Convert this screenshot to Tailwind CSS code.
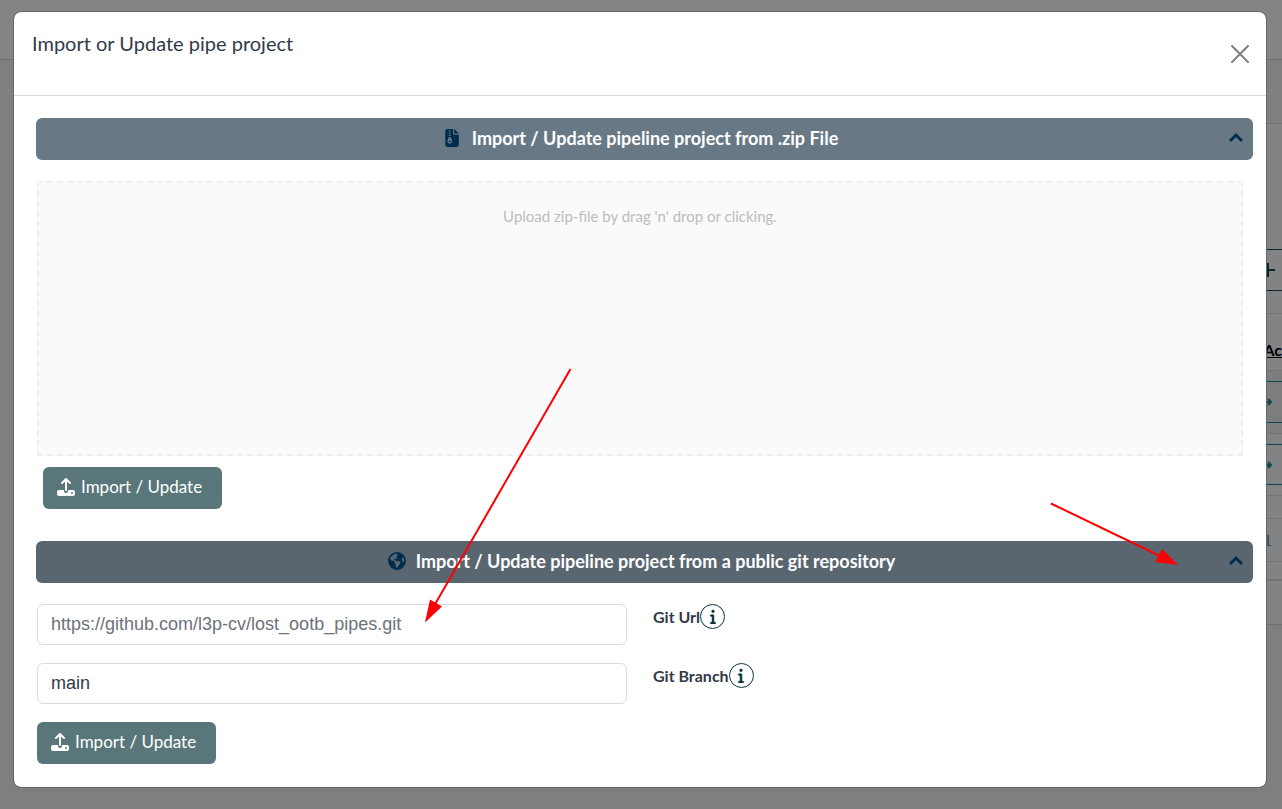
<!DOCTYPE html>
<html lang="en">
<head>
  <meta charset="UTF-8" />
  <meta name="viewport" content="width=device-width, initial-scale=1.0" />
  <title>Import or Update pipe project</title>
  <script src="https://cdn.jsdelivr.net/npm/@tailwindcss/browser@4"></script>
</head>
<body class="relative min-h-screen overflow-hidden bg-[#7e7f80] font-[Lato,sans-serif] text-[#323a49]">

  <!-- Dimmed page behind the dialog -->
  <div class="absolute inset-0 overflow-hidden" aria-hidden="true">
    <div class="h-[60px] border-b border-[#6f7072] bg-[#838485]"></div>
    <div class="mt-[63px] ml-auto w-1/2 border-y border-[#6f7072] bg-[#828384] pb-[43px]">
      <div class="flex h-[190px] flex-col items-end justify-end border-b border-[#737478] pb-[22px]">
        <div class="flex h-[42px] w-8 items-center border-y border-[#0a262b] pl-[10px] text-[#0a262b]">
          <svg class="size-4" viewBox="0 0 16 16" fill="none" stroke="currentColor" stroke-width="2"><path d="M8 1v14M1 8h14" /></svg>
        </div>
      </div>
      <div class="flex h-[57px] items-end justify-end border-b border-[#737478] pb-3">
        <span class="border-b border-black text-base leading-[14px] font-bold text-black">Ac</span>
      </div>
      <div class="flex h-[63px] items-center justify-end border-b border-[#737478] bg-[#7c7d7e]">
        <div class="flex h-[42px] w-8 items-center border-y border-[#0c484f] pl-3 text-[#0c484f]">
          <svg class="size-3" viewBox="0 0 12 12" fill="none" stroke="currentColor" stroke-width="2"><path d="M0 6h9M6 3l3 3-3 3" /></svg>
        </div>
      </div>
      <div class="flex h-[62px] items-center justify-end border-b border-[#737478]">
        <div class="flex h-[41px] w-8 items-center border-y border-[#0c484f] pl-3 text-[#0c484f]">
          <svg class="size-3" viewBox="0 0 12 12" fill="none" stroke="currentColor" stroke-width="2"><path d="M0 6h9M6 3l3 3-3 3" /></svg>
        </div>
      </div>
      <div class="h-[23px] border-b border-[#737478]"></div>
      <div class="flex h-[43px] items-center justify-end border-b border-[#737478] pr-[10px] text-base text-[#2d4a5c]">1</div>
      <div class="h-[19px] border-b-2 border-[#737478]"></div>
    </div>
  </div>

  <!-- Dialog -->
  <div role="dialog" aria-labelledby="dialog-title" class="relative mt-[11px] mr-[15px] ml-[13px] rounded-lg border border-[#666768] bg-white bg-clip-padding">
    <header class="flex h-[84px] items-center justify-between border-b border-[#d8dbe0] pr-4 pl-[18px]">
      <h1 id="dialog-title" class="pb-[22px] text-xl">Import or Update pipe project</h1>
      <button type="button" aria-label="Close" class="text-[#7f7f7f]">
        <svg class="size-5" viewBox="0 0 20 20" fill="none" stroke="currentColor" stroke-width="2" stroke-linecap="round"><path d="M2 2l16 16M18 2L2 18" /></svg>
      </button>
    </header>

    <main class="pt-[22px] pr-[13px] pb-[23px] pl-[22px]">
      <!-- Zip import -->
      <button type="button" aria-expanded="true" class="flex h-[42px] w-full items-center rounded-md bg-[#687885] px-[10px] pb-[2px] text-lg font-bold text-white">
        <span class="flex flex-1 items-center justify-center gap-[13px] pl-2">
          <svg class="h-[18px] w-[14px] text-[#002d4d]" viewBox="0 0 384 512" fill="currentColor"><path d="M64 0C28.7 0 0 28.7 0 64V448c0 35.3 28.7 64 64 64H320c35.3 0 64-28.7 64-64V160H256c-17.7 0-32-14.3-32-32V0H64zM256 0V128H384L256 0zM96 48c0-8.8 7.2-16 16-16h32c8.8 0 16 7.2 16 16s-7.2 16-16 16H112c-8.8 0-16-7.2-16-16zm0 64c0-8.8 7.2-16 16-16h32c8.8 0 16 7.2 16 16s-7.2 16-16 16H112c-8.8 0-16-7.2-16-16zm0 64c0-8.8 7.2-16 16-16h32c8.8 0 16 7.2 16 16s-7.2 16-16 16H112c-8.8 0-16-7.2-16-16zm-6.3 71.8c3.7-14 16.4-23.8 30.9-23.8h14.8c14.5 0 27.2 9.7 30.9 23.8l23.5 88.2c1.4 5.4 2.1 10.9 2.1 16.4c0 35.2-28.8 63.7-64 63.7s-64-28.5-64-63.7c0-5.5 .7-11.1 2.1-16.4l23.5-88.2zM112 336c-8.8 0-16 7.2-16 16s7.2 16 16 16h32c8.8 0 16-7.2 16-16s-7.2-16-16-16H112z" /></svg>
          Import / Update pipeline project from .zip File
        </span>
        <svg class="size-[14px] text-[#002d4d]" viewBox="0 0 14 14" fill="none" stroke="currentColor" stroke-width="3"><path d="M1 10l6-6 6 6" /></svg>
      </button>

      <div class="mt-[21px] mr-[10px] ml-px h-[275px] rounded-xs border-2 border-dashed border-[#eeeeee] bg-[#fafafa] pt-[21px] text-center text-[15px] leading-6 text-[#bdbdbd]">
        <p>Upload zip-file by drag 'n' drop or clicking.</p>
      </div>

      <button type="button" class="mt-[11px] ml-[7px] flex h-[42px] items-center gap-[6px] rounded-md bg-[#59777b] pr-5 pb-[2px] pl-[14px] text-[17px] text-white">
        <svg class="size-[18px]" viewBox="0 0 18 18" fill="none" stroke="currentColor" stroke-width="2" stroke-linecap="round" stroke-linejoin="round"><path d="M9 12V2M5 5l4-4 4 4" /><path fill="currentColor" stroke="none" d="M2 12h5v1a2 2 0 0 0 4 0v-1h5a2 2 0 0 1 2 2v2a2 2 0 0 1-2 2H2a2 2 0 0 1-2-2v-2a2 2 0 0 1 2-2z" /><circle cx="15" cy="15" r="1" fill="#59777b" stroke="none" /></svg>
        Import / Update
      </button>

      <!-- Git import -->
      <button type="button" aria-expanded="true" class="mt-8 flex h-[42px] w-full items-center rounded-md bg-[#596670] px-[10px] pb-[2px] text-lg font-bold text-white">
        <span class="flex flex-1 items-center justify-center gap-[10px] pl-2">
          <svg class="size-[18px] text-[#002d4d]" viewBox="0 0 512 512" fill="currentColor"><path d="M57.7 193l9.4 16.4c8.3 14.5 21.9 25.2 38 29.8L163 255.7c17.2 4.9 29 20.6 29 38.5v39.9c0 11 6.2 21 16 25.9s16 14.9 16 25.9v39c0 15.6 14.9 26.9 29.9 22.6c16.1-4.6 28.6-17.5 32.7-33.8l2.8-11.2c4.2-16.9 15.2-31.4 30.3-40l8.1-4.6c15-8.5 24.2-24.5 24.2-41.7v-8.3c0-12.7-5.1-24.9-14.1-33.9l-3.9-3.9c-9-9-21.2-14.1-33.9-14.1H257c-11.1 0-22.1-2.9-31.8-8.4l-34.5-19.7c-4.3-2.5-7.6-6.5-9.2-11.2c-3.2-9.6 1.1-20 10.2-24.5l5.9-3c6.6-3.3 14.3-3.9 21.3-1.5l23.2 7.7c8.2 2.7 17.2-.4 21.9-7.5c4.7-7 4.2-16.3-1.2-22.8l-13.6-16.3c-10-12-9.9-29.5 .3-41.3l15.7-18.3c8.8-10.3 10.2-25 3.5-36.7l-2.4-4.2c-3.5-.2-6.9-.3-10.4-.3C163.1 48 84.4 108.9 57.7 193zM464 256c0-36.8-9.6-71.4-26.4-101.5L412 164.8c-15.7 6.3-23.8 23.8-18.5 39.8l16.9 50.7c3.5 10.4 12 18.3 22.6 20.9l29.1 7.3c1.2-9 1.8-18.2 1.8-27.5zM0 256a256 256 0 1 1 512 0A256 256 0 1 1 0 256z" /></svg>
          Import / Update pipeline project from a public git repository
        </span>
        <svg class="size-[14px] text-[#002d4d]" viewBox="0 0 14 14" fill="none" stroke="currentColor" stroke-width="3"><path d="M1 10l6-6 6 6" /></svg>
      </button>

      <div class="mt-[21px] mr-[10px] ml-px grid grid-cols-2 gap-x-[26px] gap-y-[18px]">
        <input id="git-url" type="text" placeholder="https://github.com/l3p-cv/lost_ootb_pipes.git" class="h-[41px] rounded-md border border-[#d8dbe0] px-[13px] font-[Liberation_Sans,sans-serif] text-lg placeholder:text-[#6c717a]" />
        <div class="flex items-start">
          <label for="git-url" class="text-base leading-[26px] font-bold">Git Url</label>
          <button type="button" aria-label="About Git Url" class="flex size-[25px] items-center justify-center rounded-full border border-[#08323d] text-[#08323d]">
            <svg class="h-[15px] w-2" viewBox="0 0 192 512" fill="currentColor" stroke="currentColor" stroke-width="16"><path d="M48 80a48 48 0 1 1 96 0A48 48 0 1 1 48 80zM0 224c0-17.7 14.3-32 32-32H96c17.7 0 32 14.3 32 32V448h32c17.7 0 32 14.3 32 32s-14.3 32-32 32H32c-17.7 0-32-14.3-32-32s14.3-32 32-32H64V256H32c-17.7 0-32-14.3-32-32z" /></svg>
          </button>
        </div>
        <input id="git-branch" type="text" value="main" class="h-[41px] rounded-md border border-[#d8dbe0] px-[13px] font-[Liberation_Sans,sans-serif] text-lg" />
        <div class="flex items-start">
          <label for="git-branch" class="text-base leading-[26px] font-bold">Git Branch</label>
          <button type="button" aria-label="About Git Branch" class="flex size-[25px] items-center justify-center rounded-full border border-[#08323d] text-[#08323d]">
            <svg class="h-[15px] w-2" viewBox="0 0 192 512" fill="currentColor" stroke="currentColor" stroke-width="16"><path d="M48 80a48 48 0 1 1 96 0A48 48 0 1 1 48 80zM0 224c0-17.7 14.3-32 32-32H96c17.7 0 32 14.3 32 32V448h32c17.7 0 32 14.3 32 32s-14.3 32-32 32H32c-17.7 0-32-14.3-32-32s14.3-32 32-32H64V256H32c-17.7 0-32-14.3-32-32z" /></svg>
          </button>
        </div>
      </div>

      <button type="button" class="mt-[18px] ml-px flex h-[42px] items-center gap-[6px] rounded-md bg-[#59777b] pr-5 pb-[2px] pl-[14px] text-[17px] text-white">
        <svg class="size-[18px]" viewBox="0 0 18 18" fill="none" stroke="currentColor" stroke-width="2" stroke-linecap="round" stroke-linejoin="round"><path d="M9 12V2M5 5l4-4 4 4" /><path fill="currentColor" stroke="none" d="M2 12h5v1a2 2 0 0 0 4 0v-1h5a2 2 0 0 1 2 2v2a2 2 0 0 1-2 2H2a2 2 0 0 1-2-2v-2a2 2 0 0 1 2-2z" /><circle cx="15" cy="15" r="1" fill="#59777b" stroke="none" /></svg>
        Import / Update
      </button>
    </main>
  </div>

  <!-- Red pointer arrows -->
  <svg class="pointer-events-none absolute top-0 left-0 h-[809px] w-[1282px]" viewBox="0 0 1282 809" fill="#ff0000" stroke="#ff0000" aria-hidden="true">
    <path stroke-width="2" d="M570.5 369L434 606M1051 503.500L1160 556" />
    <path stroke="none" d="M425 622.500l5-23 12 7zM1178 565l-16-16-7 13z" />
  </svg>
</body>
</html>
